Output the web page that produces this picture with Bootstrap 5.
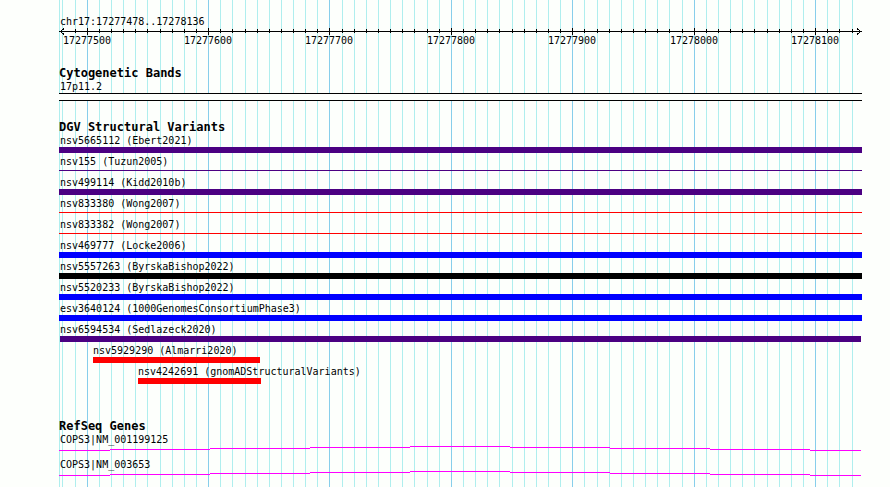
<!DOCTYPE html>
<html lang="en">
<head>
<meta charset="utf-8">
<meta name="viewport" content="width=device-width, initial-scale=1">
<title>chr17:17277478..17278136</title>
<link href="https://cdn.jsdelivr.net/npm/bootstrap@5.3.0/dist/css/bootstrap.min.css" rel="stylesheet">
<style>
  body { background: #fdfffc; color: #000; font: 10px/13px "DejaVu Sans Mono", "Liberation Mono", monospace; }
  .browser-panel { padding: 15px 28px 3px 59px; }
  .plot { isolation: isolate; }
  .grid-lines { z-index: -1; left: 59px; right: 28px; width: calc(100% - 87px); }
  svg { shape-rendering: crispEdges; }
  .minor { fill: #afeeee; }
  .major { fill: #87ceeb; }
  .feature-label { padding-left: 1px; white-space: nowrap; }
  .ruler { height: 20px; margin-bottom: 19px; }
  .ruler text { text-anchor: middle; }
  .arrow-tip { fill: none; stroke: #000; }
  .track { margin-bottom: 20px; }
  .track-title { font-size: 12px; line-height: 13px; font-weight: 700; margin: 0; font-family: "DejaVu Sans Mono", monospace; }
  .band { height: 8px; background: #fdfffc; border-top: 1px solid #000; border-bottom: 1px solid #000; }
  .feature { margin-bottom: 2px; }
  .bar-slot { height: 6px; }
  .bar { height: 6px; }
  .thin { height: 1px; }
  .indigo { background: #4b0082; }
  .blue { background: #00f; }
  .red { background: #f00; }
  .black { background: #000; }
  .bar-slot.is-thin { padding-top: 2px; }
  .variants { margin-bottom: 36px; }
  .gene svg { height: 12px; fill: #f0f; }
</style>
<script src="https://cdn.jsdelivr.net/npm/bootstrap@5.3.0/dist/js/bootstrap.bundle.min.js"></script>
</head>
<body>
<main class="browser-panel plot position-relative min-vh-100">
  <svg class="grid-lines position-absolute top-0 h-100" id="grid" aria-hidden="true"></svg>

  <header>
    <div class="feature-label">chr17:17277478..17278136</div>
    <svg class="ruler d-block w-100 overflow-visible" id="ruler" role="img" aria-label="Position scale">
      <rect x="0" y="3" width="100%" height="1"/>
      <path class="arrow-tip" d="M5 0.5L1.5 3.5L5 6.5"/>
      <svg x="100%" overflow="visible"><path class="arrow-tip" d="M-5 0.5L-1.5 3.5L-5 6.5"/></svg>
    </svg>
  </header>

  <section class="track">
    <h2 class="track-title">Cytogenetic Bands</h2>
    <div class="feature-label">17p11.2</div>
    <div class="band"></div>
  </section>

  <section class="track variants">
    <h2 class="track-title">DGV Structural Variants</h2>
    <div id="features"></div>
  </section>

  <section>
    <h2 class="track-title">RefSeq Genes</h2>
    <div class="gene"><div class="feature-label">COPS3|NM_001199125</div><svg class="d-block w-100"></svg></div>
    <div class="gene"><div class="feature-label">COPS3|NM_003653</div><svg class="d-block w-100"></svg></div>
  </section>
</main>
<script>
  // Every horizontal place is a share of the displayed region.
  const SPAN = 803;
  const pct = v => (v / SPAN * 100).toFixed(4) + '%';
  const NS = 'http://www.w3.org/2000/svg';
  const add = (parent, tag, attrs, text) => {
    const el = document.createElementNS(NS, tag);
    for (const k in attrs) el.setAttribute(k, attrs[k]);
    if (text) el.textContent = text;
    parent.appendChild(el);
  };

  const grid = document.getElementById('grid'), ruler = document.getElementById('ruler');
  const majors = [28, 149, 270, 392, 513, 635, 756];
  const minors = [3,16,40,52,64,76,88,101,113,125,137,161,173,186,198,210,222,234,246,258,
    283,295,307,319,331,343,355,368,380,404,416,428,440,453,465,477,489,501,525,538,550,562,574,
    586,598,610,623,647,659,671,683,695,708,720,732,744,768,780,793];
  add(grid, 'rect', {class: 'minor', x: 0, y: 0, width: 1, height: '100%'});
  minors.forEach(x => {
    add(grid, 'rect', {class: 'minor', x: pct(x), y: 0, width: 1, height: '100%'});
    if (x > 3) add(ruler, 'rect', {x: pct(x), y: 1, width: 1, height: 4});
  });
  majors.forEach((x, i) => {
    add(grid, 'rect', {class: 'major', x: pct(x), y: 0, width: 1, height: '100%'});
    add(ruler, 'rect', {x: pct(x), y: 0, width: 1, height: 7});
    add(ruler, 'text', {x: pct(x), y: 16}, String(17277500 + i * 100));
  });

  const features = [
    ['nsv5665112 (Ebert2021)', 'indigo', 0, 803],
    ['nsv155 (Tuzun2005)', 'indigo thin', 0, 803],
    ['nsv499114 (Kidd2010b)', 'indigo', 0, 803],
    ['nsv833380 (Wong2007)', 'red thin', 0, 803],
    ['nsv833382 (Wong2007)', 'red thin', 0, 803],
    ['nsv469777 (Locke2006)', 'blue', 0, 803],
    ['nsv5557263 (ByrskaBishop2022)', 'black', 0, 803],
    ['nsv5520233 (ByrskaBishop2022)', 'blue', 0, 803],
    ['esv3640124 (1000GenomesConsortiumPhase3)', 'blue', 0, 803],
    ['nsv6594534 (Sedlazeck2020)', 'indigo', 1, 801],
    ['nsv5929290 (Almarri2020)', 'red', 34, 167],
    ['nsv4242691 (gnomADStructuralVariants)', 'red', 79, 123]
  ];
  document.getElementById('features').innerHTML = features.map(([name, kind, start, length]) =>
    `<div class="feature">
      <div class="${start > 1 ? 'text-nowrap' : 'feature-label'}" style="margin-left:${start > 1 ? pct(start) : 0}">${name}</div>
      <div class="bar-slot ${kind.includes('thin') ? 'is-thin' : ''}" style="margin-left:${pct(start)};width:${pct(length)}"><div class="bar ${kind}"></div></div>
    </div>`).join('');

  // Intron line, stepped by height: [start, end, y]
  const steps = [[0,51,4],[51,151,3],[151,251,2],[251,351,1],[351,451,0],[451,551,1],[551,651,2],[651,751,3],[751,802,4]];
  document.querySelectorAll('.gene svg').forEach(s =>
    steps.forEach(([a, b, y]) => add(s, 'rect', {x: pct(a), y, width: pct(b - a), height: 1})));
</script>
</body>
</html>
